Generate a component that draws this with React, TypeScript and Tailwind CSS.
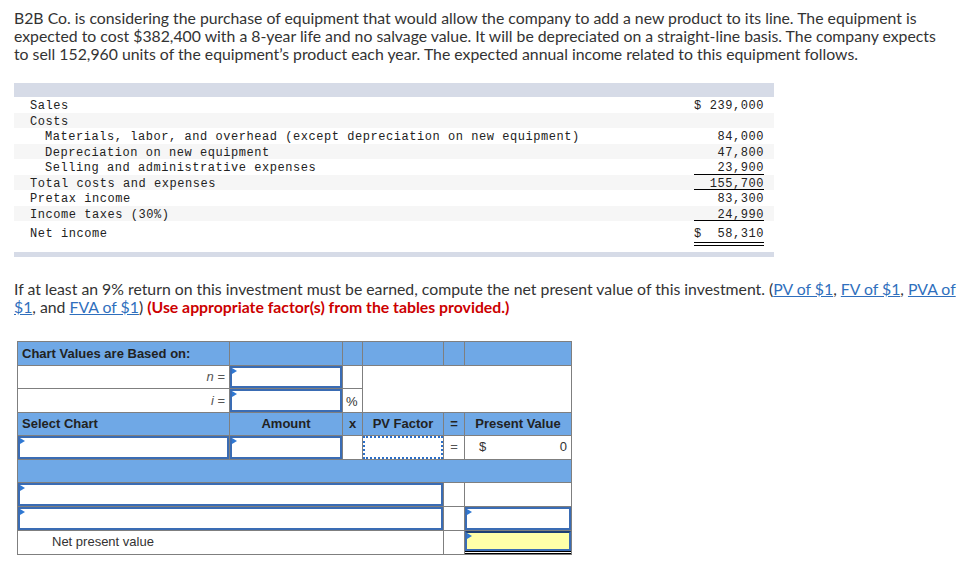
import React from 'react';

const sans = { fontFamily: 'Lato, "Liberation Sans", sans-serif' };

const Flag = () => (
    <span className="absolute left-0 top-0 h-0 w-0 border-y-[3.5px] border-l-[5px] border-y-transparent border-l-[#2f78d2]" />
);

const InputBox = ({ flag = true }: { flag?: boolean }) => (
    <div className="relative h-full w-full border-2 border-[#3a6cb4] bg-white">{flag && <Flag />}</div>
);

type Row = { label: string; value?: string; indent?: boolean; line?: boolean; dollar?: boolean };

const rows: Row[] = [
    { label: 'Sales', value: '239,000', dollar: true },
    { label: 'Costs' },
    { label: 'Materials, labor, and overhead (except depreciation on new equipment)', value: '84,000', indent: true },
    { label: 'Depreciation on new equipment', value: '47,800', indent: true },
    { label: 'Selling and administrative expenses', value: '23,900', indent: true, line: true },
    { label: 'Total costs and expenses', value: '155,700', line: true },
    { label: 'Pretax income', value: '83,300' },
    { label: 'Income taxes (30%)', value: '24,990', line: true },
];

const IncomeTable = () => (
    <div className="ml-[14px] mt-[20px] w-[760px] text-[12px] leading-[13px] tracking-[0.55px] text-[#222]" style={{ fontFamily: '"Liberation Mono", monospace' }}>
        <div className="h-[14px] bg-[#d6dbe7]" />
        {rows.map((r, i) => (
            <div key={r.label} className={`flex h-[15.5px] items-start pr-[10px] ${i % 2 ? 'bg-[#f6f6f6]' : 'bg-white'}`}>
                <div className={`flex-1 pt-[3px] ${r.indent ? 'pl-[31px]' : 'pl-[16px]'}`}>{r.label}</div>
                <div className={`flex h-full w-[70px] justify-between pt-[3px] ${r.line ? 'border-b border-black' : ''}`}>
                    <span>{r.dollar ? '$' : ''}</span>
                    <span>{r.value}</span>
                </div>
            </div>
        ))}
        <div className="flex h-[26px] items-start pr-[10px] pt-[7px]">
            <div className="flex-1 pl-[16px]">Net income</div>
            <div className="flex w-[70px] justify-between border-b-4 border-double border-black pb-[1px]">
                <span>$</span>
                <span>58,310</span>
            </div>
        </div>
        <div className="mt-[5px] h-[5px] bg-[#d6dbe7]" />
    </div>
);

const Link = ({ children }: { children: React.ReactNode }) => (
    <a href="#" className="text-[#2f6fbd] underline">{children}</a>
);

const cell = 'border border-[#7f7f7f] h-[23px] p-0';
const head = `${cell} bg-[#6fa8e6] font-bold text-[#222]`;

export default function App() {
    return (
        <div className="min-h-screen bg-white pb-6">
            <p className="px-[14px] pt-[9px] text-[15.8px] leading-[18px] text-[#333] whitespace-nowrap" style={sans}>
                B2B Co. is considering the purchase of equipment that would allow the company to add a new product to its line. The equipment is
                <br />
                expected to cost $382,400 with a 8-year life and no salvage value. It will be depreciated on a straight-line basis. The company expects
                <br />
                to sell 152,960 units of the equipment’s product each year. The expected annual income related to this equipment follows.
            </p>

            <IncomeTable />

            <p className="mt-[23px] px-[14px] text-[15.8px] leading-[18px] text-[#333] whitespace-nowrap" style={sans}>
                If at least an 9% return on this investment must be earned, compute the net present value of this investment. (<Link>PV of $1</Link>, <Link>FV of $1</Link>, <Link>PVA of</Link>
                <br />
                <Link>$1</Link>, and <Link>FVA of $1</Link>) <span className="font-bold text-[#c00]">(Use appropriate factor(s) from the tables provided.)</span>
            </p>

            <table className="ml-[17px] mt-[25px] w-[554px] table-fixed border-collapse text-[13px] text-[#333]" style={{ fontFamily: '"Liberation Sans", Arial, sans-serif' }}>
                <colgroup>
                    <col className="w-[212px]" />
                    <col className="w-[113px]" />
                    <col className="w-[20px]" />
                    <col className="w-[81px]" />
                    <col className="w-[21px]" />
                    <col className="w-[107px]" />
                </colgroup>
                <tbody>
                    <tr>
                        <td className={`${head} h-[24px] pl-[4px]`}>Chart Values are Based on:</td>
                        <td className={head} />
                        <td className={head} />
                        <td className={head} />
                        <td className={head} />
                        <td className={head} />
                    </tr>
                    <tr>
                        <td className={`${cell} pr-[4px] text-right text-[#555]`}><i>n</i> =</td>
                        <td className={cell}><InputBox /></td>
                        <td className={cell} />
                        <td className={cell} colSpan={3} rowSpan={2} />
                    </tr>
                    <tr>
                        <td className={`${cell} pr-[4px] text-right text-[#555]`}><i>i</i> =</td>
                        <td className={cell}><InputBox /></td>
                        <td className={`${cell} pl-[3px] pt-[3px]`}>%</td>
                    </tr>
                    <tr>
                        <td className={`${head} pl-[4px]`}>Select Chart</td>
                        <td className={`${head} text-center`}>Amount</td>
                        <td className={`${head} text-center`}>x</td>
                        <td className={`${head} text-center`}>PV Factor</td>
                        <td className={`${head} text-center`}>=</td>
                        <td className={`${head} text-center`}>Present Value</td>
                    </tr>
                    <tr>
                        <td className={`${cell} h-[24px]`}><InputBox /></td>
                        <td className={cell}><InputBox /></td>
                        <td className={cell} />
                        <td className={cell}>
                            <div className="h-full w-full border-2 border-dotted border-[#2a6ec8]" />
                        </td>
                        <td className={`${cell} text-center text-[#555]`}>=</td>
                        <td className={`${cell} px-[4px]`}>
                            <div className="flex justify-between pl-[10px]">
                                <span>$</span>
                                <span>0</span>
                            </div>
                        </td>
                    </tr>
                    <tr>
                        <td className={`${cell} bg-[#6fa8e6]`} colSpan={6} />
                    </tr>
                    <tr>
                        <td className={`${cell} h-[24px]`} colSpan={4}><InputBox /></td>
                        <td className={cell} />
                        <td className={cell} />
                    </tr>
                    <tr>
                        <td className={`${cell} h-[24px]`} colSpan={4}><InputBox /></td>
                        <td className={cell} />
                        <td className={cell}><InputBox /></td>
                    </tr>
                    <tr>
                        <td className={`${cell} h-[24px] pl-[34px]`} colSpan={4}>Net present value</td>
                        <td className={cell} />
                        <td className={cell}>
                            <div className="flex h-full flex-col">
                                <div className="relative flex-1 border-2 border-t-[#1d3f73] border-[#3a6cb4] bg-[#ffffa8]"><Flag /></div>
                                <div className="h-[3px] border-y border-black" />
                            </div>
                        </td>
                    </tr>
                </tbody>
            </table>
        </div>
    );
}
